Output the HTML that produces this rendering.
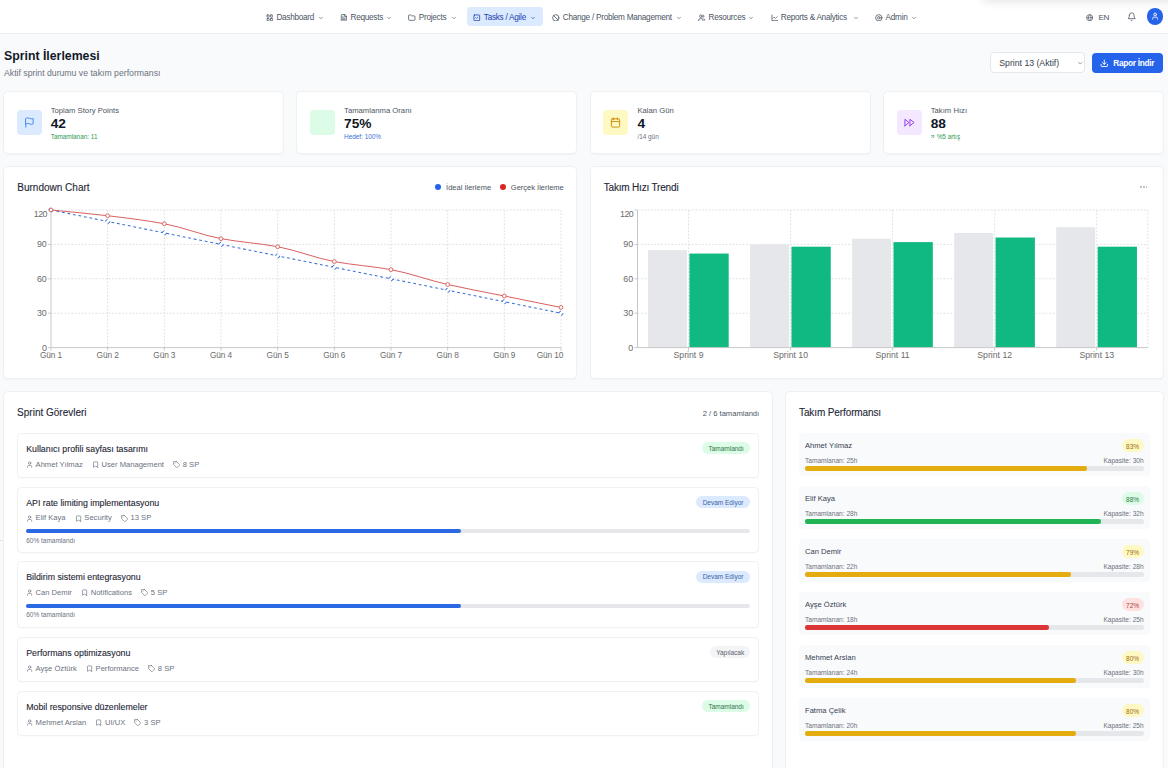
<!DOCTYPE html><html><head><meta charset="utf-8"><style>
html,body{margin:0;padding:0;}
body{width:1168px;height:768px;overflow:hidden;position:relative;background:#f9fafb;font-family:"Liberation Sans", sans-serif;}
.t{position:absolute;white-space:nowrap;font-family:"Liberation Sans", sans-serif;}
svg{display:block}
</style></head><body>
<div style="position:absolute;left:0px;top:0px;width:1168px;height:33px;background:#fff;border-bottom:1px solid #eceef1;box-sizing:content-box"></div>
<div style="position:absolute;left:982px;top:-40px;width:200px;height:40px;background:#fff;border-radius:6px;box-shadow:0 2px 10px rgba(0,0,0,0.10)"></div>
<div style="position:absolute;left:466.8px;top:7.1px;width:76.4px;height:19px;background:#dbeafe;border-radius:3.5px"></div>
<svg style="position:absolute;left:265.90000000000003px;top:13.8px;" width="7.6" height="7.6" viewBox="0 0 24 24" fill="none" stroke="#4b5563" stroke-width="2.5" stroke-linecap="round" stroke-linejoin="round"><rect width="7" height="7" x="3" y="3" rx="1.5"/><rect width="7" height="7" x="14" y="3" rx="1.5"/><rect width="7" height="7" x="14" y="14" rx="1.5"/><rect width="7" height="7" x="3" y="14" rx="1.5"/></svg>
<div class="t" style="left:276.4px;top:13.96px;font-size:8.2px;line-height:8.2px;color:#4b5563;font-weight:400;letter-spacing:-0.26px">Dashboard</div>
<svg style="position:absolute;left:317.5px;top:14.6px;" width="6" height="6" viewBox="0 0 24 24" fill="none" stroke="#4b5563" stroke-width="2.4" stroke-linecap="round" stroke-linejoin="round"><path d="m6 9 6 6 6-6"/></svg>
<svg style="position:absolute;left:339.8px;top:13.8px;" width="7.6" height="7.6" viewBox="0 0 24 24" fill="none" stroke="#4b5563" stroke-width="2.5" stroke-linecap="round" stroke-linejoin="round"><path d="M15 2H6a2 2 0 0 0-2 2v16a2 2 0 0 0 2 2h12a2 2 0 0 0 2-2V7Z"/><path d="M14 2v4a2 2 0 0 0 2 2h4"/><path d="M10 9H8"/><path d="M16 13H8"/><path d="M16 17H8"/></svg>
<div class="t" style="left:350.5px;top:13.96px;font-size:8.2px;line-height:8.2px;color:#4b5563;font-weight:400;letter-spacing:-0.26px">Requests</div>
<svg style="position:absolute;left:385.8px;top:14.6px;" width="6" height="6" viewBox="0 0 24 24" fill="none" stroke="#4b5563" stroke-width="2.4" stroke-linecap="round" stroke-linejoin="round"><path d="m6 9 6 6 6-6"/></svg>
<svg style="position:absolute;left:408.2px;top:13.8px;" width="7.6" height="7.6" viewBox="0 0 24 24" fill="none" stroke="#4b5563" stroke-width="2.5" stroke-linecap="round" stroke-linejoin="round"><path d="M20 20a2 2 0 0 0 2-2V8a2 2 0 0 0-2-2h-7.9a2 2 0 0 1-1.69-.9L9.6 3.9A2 2 0 0 0 7.93 3H4a2 2 0 0 0-2 2v13a2 2 0 0 0 2 2Z"/></svg>
<div class="t" style="left:418.8px;top:13.96px;font-size:8.2px;line-height:8.2px;color:#4b5563;font-weight:400;letter-spacing:-0.26px">Projects</div>
<svg style="position:absolute;left:450.6px;top:14.6px;" width="6" height="6" viewBox="0 0 24 24" fill="none" stroke="#4b5563" stroke-width="2.4" stroke-linecap="round" stroke-linejoin="round"><path d="m6 9 6 6 6-6"/></svg>
<svg style="position:absolute;left:473.3px;top:13.8px;" width="7.6" height="7.6" viewBox="0 0 24 24" fill="none" stroke="#1e40af" stroke-width="2.5" stroke-linecap="round" stroke-linejoin="round"><rect width="18" height="18" x="3" y="3" rx="2"/><path d="m9 12 2 2 4-4"/></svg>
<div class="t" style="left:483.8px;top:13.96px;font-size:8.2px;line-height:8.2px;color:#1e40af;font-weight:400;letter-spacing:-0.26px">Tasks / Agile</div>
<svg style="position:absolute;left:529.5999999999999px;top:14.6px;" width="6" height="6" viewBox="0 0 24 24" fill="none" stroke="#1e40af" stroke-width="2.4" stroke-linecap="round" stroke-linejoin="round"><path d="m6 9 6 6 6-6"/></svg>
<svg style="position:absolute;left:552.3px;top:13.8px;" width="7.6" height="7.6" viewBox="0 0 24 24" fill="none" stroke="#4b5563" stroke-width="2.5" stroke-linecap="round" stroke-linejoin="round"><circle cx="12" cy="12" r="10"/><path d="m4.9 4.9 14.2 14.2"/></svg>
<div class="t" style="left:562.8px;top:13.96px;font-size:8.2px;line-height:8.2px;color:#4b5563;font-weight:400;letter-spacing:-0.26px">Change / Problem Management</div>
<svg style="position:absolute;left:676.0px;top:14.6px;" width="6" height="6" viewBox="0 0 24 24" fill="none" stroke="#4b5563" stroke-width="2.4" stroke-linecap="round" stroke-linejoin="round"><path d="m6 9 6 6 6-6"/></svg>
<svg style="position:absolute;left:697.5px;top:13.8px;" width="7.6" height="7.6" viewBox="0 0 24 24" fill="none" stroke="#4b5563" stroke-width="2.5" stroke-linecap="round" stroke-linejoin="round"><path d="M16 21v-2a4 4 0 0 0-4-4H6a4 4 0 0 0-4 4v2"/><circle cx="9" cy="7" r="4"/><path d="M22 21v-2a4 4 0 0 0-3-3.87"/><path d="M16 3.13a4 4 0 0 1 0 7.75"/></svg>
<div class="t" style="left:708.5px;top:13.96px;font-size:8.2px;line-height:8.2px;color:#4b5563;font-weight:400;letter-spacing:-0.26px">Resources</div>
<svg style="position:absolute;left:748.4px;top:14.6px;" width="6" height="6" viewBox="0 0 24 24" fill="none" stroke="#4b5563" stroke-width="2.4" stroke-linecap="round" stroke-linejoin="round"><path d="m6 9 6 6 6-6"/></svg>
<svg style="position:absolute;left:770.5px;top:13.8px;" width="7.6" height="7.6" viewBox="0 0 24 24" fill="none" stroke="#4b5563" stroke-width="2.5" stroke-linecap="round" stroke-linejoin="round"><path d="M3 3v18h18"/><path d="m19 9-5 5-4-4-3 3"/></svg>
<div class="t" style="left:780.8px;top:13.96px;font-size:8.2px;line-height:8.2px;color:#4b5563;font-weight:400;letter-spacing:-0.26px">Reports &amp; Analytics</div>
<svg style="position:absolute;left:853.1999999999999px;top:14.6px;" width="6" height="6" viewBox="0 0 24 24" fill="none" stroke="#4b5563" stroke-width="2.4" stroke-linecap="round" stroke-linejoin="round"><path d="m6 9 6 6 6-6"/></svg>
<svg style="position:absolute;left:875.3px;top:13.8px;" width="7.6" height="7.6" viewBox="0 0 24 24" fill="none" stroke="#4b5563" stroke-width="2.5" stroke-linecap="round" stroke-linejoin="round"><circle cx="12" cy="12" r="10"/><circle cx="12" cy="12" r="4"/></svg>
<div class="t" style="left:885.6px;top:13.96px;font-size:8.2px;line-height:8.2px;color:#4b5563;font-weight:400;letter-spacing:-0.26px">Admin</div>
<svg style="position:absolute;left:910.8px;top:14.6px;" width="6" height="6" viewBox="0 0 24 24" fill="none" stroke="#4b5563" stroke-width="2.4" stroke-linecap="round" stroke-linejoin="round"><path d="m6 9 6 6 6-6"/></svg>
<svg style="position:absolute;left:1086.0px;top:13.7px;" width="7.4" height="7.4" viewBox="0 0 24 24" fill="none" stroke="#4b5563" stroke-width="2.2" stroke-linecap="round" stroke-linejoin="round"><circle cx="12" cy="12" r="10"/><path d="M12 2a14.5 14.5 0 0 0 0 20 14.5 14.5 0 0 0 0-20"/><path d="M2 12h20"/></svg>
<div class="t" style="left:1098.4px;top:13.64px;font-size:8.1px;line-height:8.1px;color:#4b5563;font-weight:400;letter-spacing:-0.4px">EN</div>
<svg style="position:absolute;left:1126.8px;top:12.3px;" width="9.4" height="9.4" viewBox="0 0 24 24" fill="none" stroke="#4b5563" stroke-width="2" stroke-linecap="round" stroke-linejoin="round"><path d="M6 8a6 6 0 0 1 12 0c0 7 3 9 3 9H3s3-2 3-9"/><path d="M10.3 21a1.94 1.94 0 0 0 3.4 0"/></svg>
<div style="position:absolute;left:1146.5px;top:8.3px;width:16.6px;height:16.6px;background:#2563eb;border-radius:50%"></div>
<svg style="position:absolute;left:1150.9px;top:12.4px;" width="8.2" height="8.2" viewBox="0 0 24 24" fill="none" stroke="#fff" stroke-width="2.6" stroke-linecap="round" stroke-linejoin="round"><path d="M19 21v-2a4 4 0 0 0-4-4H9a4 4 0 0 0-4 4v2"/><circle cx="12" cy="7" r="4"/></svg>
<div class="t" style="left:4px;top:50.39px;font-size:12.3px;line-height:12.3px;color:#111827;font-weight:700;">Sprint İlerlemesi</div>
<div class="t" style="left:4px;top:68.74px;font-size:8.7px;line-height:8.7px;color:#6b7280;font-weight:400;">Aktif sprint durumu ve takım performansı</div>
<div style="position:absolute;left:990.0px;top:52.2px;width:95.0px;height:21px;background:#fff;border:1px solid #e5e7eb;border-radius:4px;box-sizing:border-box"></div>
<div class="t" style="left:999.3px;top:58.94px;font-size:8.7px;line-height:8.7px;color:#374151;font-weight:400;">Sprint 13 (Aktif)</div>
<svg style="position:absolute;left:1077.4px;top:60.2px;" width="6.5" height="6.5" viewBox="0 0 24 24" fill="none" stroke="#6b7280" stroke-width="2.6" stroke-linecap="round" stroke-linejoin="round"><path d="m6 9 6 6 6-6"/></svg>
<div style="position:absolute;left:1092.2px;top:52.5px;width:70.8px;height:20.5px;background:#2563eb;border-radius:4px"></div>
<svg style="position:absolute;left:1099.8px;top:58.9px;" width="8.6" height="8.6" viewBox="0 0 24 24" fill="none" stroke="#fff" stroke-width="2.6" stroke-linecap="round" stroke-linejoin="round"><path d="M21 15v4a2 2 0 0 1-2 2H5a2 2 0 0 1-2-2v-4"/><polyline points="7 10 12 15 17 10"/><line x1="12" x2="12" y1="15" y2="3"/></svg>
<div class="t" style="left:1113.3px;top:59.17px;font-size:8.3px;line-height:8.3px;color:#fff;font-weight:700;letter-spacing:-0.3px">Rapor İndir</div>
<div style="position:absolute;left:3.0px;top:91.2px;width:280.95px;height:62.5px;background:#fff;border:1px solid #eff0f2;border-radius:4.5px;box-sizing:border-box;box-shadow:0 1px 1.5px rgba(0,0,0,0.03)"></div>
<div style="position:absolute;left:16.7px;top:110.2px;width:25px;height:25px;background:#dbeafe;border-radius:4px"></div>
<svg style="position:absolute;left:23.7px;top:117.2px;" width="11" height="11" viewBox="0 0 24 24" fill="none" stroke="#3b82f6" stroke-width="2" stroke-linecap="round" stroke-linejoin="round"><path d="M4 15s1-1 4-1 5 2 8 2 4-1 4-1V3s-1 1-4 1-5-2-8-2-4 1-4 1z"/><line x1="4" x2="4" y1="22" y2="15"/></svg>
<div class="t" style="left:50.7px;top:107.28px;font-size:7.7px;line-height:7.7px;color:#4b5563;font-weight:400;">Toplam Story Points</div>
<div class="t" style="left:50.7px;top:117.30px;font-size:13.7px;line-height:13.7px;color:#111827;font-weight:700;">42</div>
<div class="t" style="left:50.7px;top:134.08px;font-size:6.4px;line-height:6.4px;color:#2f9a58;font-weight:400;">Tamamlanan: 11</div>
<div style="position:absolute;left:296.34999999999997px;top:91.2px;width:280.95px;height:62.5px;background:#fff;border:1px solid #eff0f2;border-radius:4.5px;box-sizing:border-box;box-shadow:0 1px 1.5px rgba(0,0,0,0.03)"></div>
<div style="position:absolute;left:310.04999999999995px;top:110.2px;width:25px;height:25px;background:#dcfce7;border-radius:4px"></div>
<div class="t" style="left:344.04999999999995px;top:107.28px;font-size:7.7px;line-height:7.7px;color:#4b5563;font-weight:400;">Tamamlanma Oranı</div>
<div class="t" style="left:344.04999999999995px;top:117.30px;font-size:13.7px;line-height:13.7px;color:#111827;font-weight:700;">75%</div>
<div class="t" style="left:344.04999999999995px;top:134.08px;font-size:6.4px;line-height:6.4px;color:#3b6fd6;font-weight:400;">Hedef: 100%</div>
<div style="position:absolute;left:589.6999999999999px;top:91.2px;width:280.95px;height:62.5px;background:#fff;border:1px solid #eff0f2;border-radius:4.5px;box-sizing:border-box;box-shadow:0 1px 1.5px rgba(0,0,0,0.03)"></div>
<div style="position:absolute;left:603.4px;top:110.2px;width:25px;height:25px;background:#fef9c3;border-radius:4px"></div>
<svg style="position:absolute;left:610.4px;top:117.2px;" width="11" height="11" viewBox="0 0 24 24" fill="none" stroke="#ca8a04" stroke-width="2" stroke-linecap="round" stroke-linejoin="round"><rect width="18" height="18" x="3" y="4" rx="2"/><path d="M16 2v4"/><path d="M8 2v4"/><path d="M3 10h18"/></svg>
<div class="t" style="left:637.4px;top:107.28px;font-size:7.7px;line-height:7.7px;color:#4b5563;font-weight:400;">Kalan Gün</div>
<div class="t" style="left:637.4px;top:117.30px;font-size:13.7px;line-height:13.7px;color:#111827;font-weight:700;">4</div>
<div class="t" style="left:637.4px;top:134.08px;font-size:6.4px;line-height:6.4px;color:#6b7280;font-weight:400;">/14 gün</div>
<div style="position:absolute;left:883.05px;top:91.2px;width:280.95px;height:62.5px;background:#fff;border:1px solid #eff0f2;border-radius:4.5px;box-sizing:border-box;box-shadow:0 1px 1.5px rgba(0,0,0,0.03)"></div>
<div style="position:absolute;left:896.75px;top:110.2px;width:25px;height:25px;background:#f3e8ff;border-radius:4px"></div>
<svg style="position:absolute;left:903.75px;top:117.2px;" width="11" height="11" viewBox="0 0 24 24" fill="none" stroke="#9333ea" stroke-width="2" stroke-linecap="round" stroke-linejoin="round"><polygon points="13 19 22 12 13 5 13 19"/><polygon points="2 19 11 12 2 5 2 19"/></svg>
<div class="t" style="left:930.75px;top:107.28px;font-size:7.7px;line-height:7.7px;color:#4b5563;font-weight:400;">Takım Hızı</div>
<div class="t" style="left:930.75px;top:117.30px;font-size:13.7px;line-height:13.7px;color:#111827;font-weight:700;">88</div>
<svg style="position:absolute;left:930.4499999999999px;top:133.6px;" width="5.2" height="5.2" viewBox="0 0 24 24" fill="none" stroke="#2f9a58" stroke-width="2.6" stroke-linecap="round" stroke-linejoin="round"><path d="M7 17 17 7"/><path d="M7 7h10v10"/></svg>
<div class="t" style="left:936.65px;top:134.08px;font-size:6.4px;line-height:6.4px;color:#2f9a58;font-weight:400;">%5 artış</div>
<div style="position:absolute;left:3.0px;top:165.9px;width:574.3px;height:213.6px;background:#fff;border:1px solid #eff0f2;border-radius:4.5px;box-sizing:border-box;box-shadow:0 1px 1.5px rgba(0,0,0,0.03)"></div>
<div style="position:absolute;left:589.6999999999999px;top:165.9px;width:574.3px;height:213.6px;background:#fff;border:1px solid #eff0f2;border-radius:4.5px;box-sizing:border-box;box-shadow:0 1px 1.5px rgba(0,0,0,0.03)"></div>
<div class="t" style="left:17.3px;top:183.24px;font-size:10px;line-height:10px;color:#1f2937;font-weight:400;-webkit-text-stroke:0.12px #1f2937">Burndown Chart</div>
<div class="t" style="left:603.7px;top:183.24px;font-size:10px;line-height:10px;color:#1f2937;font-weight:400;-webkit-text-stroke:0.12px #1f2937;letter-spacing:-0.18px">Takım Hızı Trendi</div>
<div style="position:absolute;left:435.3px;top:184.0px;width:6.2px;height:6.2px;background:#2563eb;border-radius:50%"></div>
<div class="t" style="left:446.1px;top:184.45px;font-size:7.5px;line-height:7.5px;color:#4b5563;font-weight:400;">İdeal İlerleme</div>
<div style="position:absolute;left:499.9px;top:184.0px;width:6.2px;height:6.2px;background:#dc2626;border-radius:50%"></div>
<div class="t" style="left:510.8px;top:184.45px;font-size:7.5px;line-height:7.5px;color:#4b5563;font-weight:400;">Gerçek İlerleme</div>
<div style="position:absolute;left:1140.3px;top:186.0px;width:1.6px;height:2.0px;background:#c4c4c4"></div>
<div style="position:absolute;left:1143.0px;top:186.0px;width:1.6px;height:2.0px;background:#c4c4c4"></div>
<div style="position:absolute;left:1145.7px;top:186.0px;width:1.6px;height:2.0px;background:#c4c4c4"></div>
<svg style="position:absolute;left:0;top:0" width="1168" height="768"><line x1="51.0" y1="313.20000000000005" x2="561.0" y2="313.20000000000005" stroke="#dcdfe3" stroke-dasharray="1.7 1.7"/><line x1="51.0" y1="278.8" x2="561.0" y2="278.8" stroke="#dcdfe3" stroke-dasharray="1.7 1.7"/><line x1="51.0" y1="244.40000000000003" x2="561.0" y2="244.40000000000003" stroke="#dcdfe3" stroke-dasharray="1.7 1.7"/><line x1="51.0" y1="210.00000000000003" x2="561.0" y2="210.00000000000003" stroke="#dcdfe3" stroke-dasharray="1.7 1.7"/><line x1="107.66666666666666" y1="210.00000000000003" x2="107.66666666666666" y2="347.6" stroke="#dcdfe3" stroke-dasharray="1.7 1.7"/><line x1="164.33333333333331" y1="210.00000000000003" x2="164.33333333333331" y2="347.6" stroke="#dcdfe3" stroke-dasharray="1.7 1.7"/><line x1="221.0" y1="210.00000000000003" x2="221.0" y2="347.6" stroke="#dcdfe3" stroke-dasharray="1.7 1.7"/><line x1="277.66666666666663" y1="210.00000000000003" x2="277.66666666666663" y2="347.6" stroke="#dcdfe3" stroke-dasharray="1.7 1.7"/><line x1="334.3333333333333" y1="210.00000000000003" x2="334.3333333333333" y2="347.6" stroke="#dcdfe3" stroke-dasharray="1.7 1.7"/><line x1="391.0" y1="210.00000000000003" x2="391.0" y2="347.6" stroke="#dcdfe3" stroke-dasharray="1.7 1.7"/><line x1="447.6666666666667" y1="210.00000000000003" x2="447.6666666666667" y2="347.6" stroke="#dcdfe3" stroke-dasharray="1.7 1.7"/><line x1="504.3333333333333" y1="210.00000000000003" x2="504.3333333333333" y2="347.6" stroke="#dcdfe3" stroke-dasharray="1.7 1.7"/><line x1="561.0" y1="210.00000000000003" x2="561.0" y2="347.6" stroke="#dcdfe3" stroke-dasharray="1.7 1.7"/><line x1="51.0" y1="210.00000000000003" x2="51.0" y2="347.6" stroke="#c8c8c8" stroke-width="1"/><line x1="51.0" y1="347.6" x2="561.0" y2="347.6" stroke="#c8c8c8" stroke-width="1"/><line x1="48.0" y1="347.6" x2="51.0" y2="347.6" stroke="#c8c8c8"/><line x1="48.0" y1="313.20000000000005" x2="51.0" y2="313.20000000000005" stroke="#c8c8c8"/><line x1="48.0" y1="278.8" x2="51.0" y2="278.8" stroke="#c8c8c8"/><line x1="48.0" y1="244.40000000000003" x2="51.0" y2="244.40000000000003" stroke="#c8c8c8"/><line x1="48.0" y1="210.00000000000003" x2="51.0" y2="210.00000000000003" stroke="#c8c8c8"/><line x1="51.0" y1="347.6" x2="51.0" y2="350.6" stroke="#c8c8c8"/><line x1="107.66666666666666" y1="347.6" x2="107.66666666666666" y2="350.6" stroke="#c8c8c8"/><line x1="164.33333333333331" y1="347.6" x2="164.33333333333331" y2="350.6" stroke="#c8c8c8"/><line x1="221.0" y1="347.6" x2="221.0" y2="350.6" stroke="#c8c8c8"/><line x1="277.66666666666663" y1="347.6" x2="277.66666666666663" y2="350.6" stroke="#c8c8c8"/><line x1="334.3333333333333" y1="347.6" x2="334.3333333333333" y2="350.6" stroke="#c8c8c8"/><line x1="391.0" y1="347.6" x2="391.0" y2="350.6" stroke="#c8c8c8"/><line x1="447.6666666666667" y1="347.6" x2="447.6666666666667" y2="350.6" stroke="#c8c8c8"/><line x1="504.3333333333333" y1="347.6" x2="504.3333333333333" y2="350.6" stroke="#c8c8c8"/><line x1="561.0" y1="347.6" x2="561.0" y2="350.6" stroke="#c8c8c8"/><polyline points="51.00,210.00 107.67,221.47 164.33,232.93 221.00,244.40 277.67,255.87 334.33,267.33 391.00,278.80 447.67,290.27 504.33,301.73 561.00,313.20" fill="none" stroke="#3a6fd8" stroke-width="1.05" stroke-dasharray="2.8 2.8"/><path d="M51.00,210.00 C69.89,211.91 88.78,213.50 107.67,215.73 C126.56,217.96 145.44,220.28 164.33,223.76 C183.22,227.24 202.11,235.19 221.00,238.67 C239.89,242.14 258.78,243.22 277.67,246.69 C296.56,250.17 315.44,258.12 334.33,261.60 C353.22,265.08 372.11,266.15 391.00,269.63 C409.89,273.10 428.78,280.21 447.67,284.53 C466.56,288.85 485.44,292.18 504.33,296.00 C523.22,299.82 542.11,303.64 561.00,307.47" fill="none" stroke="#d9605f" stroke-width="1.0"/><circle cx="51.00" cy="210.00" r="2.0" fill="#fff" stroke="#3a6fd8" stroke-width="1.0" stroke-dasharray="2.8 2.8"/><circle cx="51.00" cy="210.00" r="1.9" fill="#fff" stroke="#d9605f" stroke-width="0.95"/><circle cx="107.67" cy="221.47" r="2.0" fill="#fff" stroke="#3a6fd8" stroke-width="1.0" stroke-dasharray="2.8 2.8"/><circle cx="107.67" cy="215.73" r="1.9" fill="#fff" stroke="#d9605f" stroke-width="0.95"/><circle cx="164.33" cy="232.93" r="2.0" fill="#fff" stroke="#3a6fd8" stroke-width="1.0" stroke-dasharray="2.8 2.8"/><circle cx="164.33" cy="223.76" r="1.9" fill="#fff" stroke="#d9605f" stroke-width="0.95"/><circle cx="221.00" cy="244.40" r="2.0" fill="#fff" stroke="#3a6fd8" stroke-width="1.0" stroke-dasharray="2.8 2.8"/><circle cx="221.00" cy="238.67" r="1.9" fill="#fff" stroke="#d9605f" stroke-width="0.95"/><circle cx="277.67" cy="255.87" r="2.0" fill="#fff" stroke="#3a6fd8" stroke-width="1.0" stroke-dasharray="2.8 2.8"/><circle cx="277.67" cy="246.69" r="1.9" fill="#fff" stroke="#d9605f" stroke-width="0.95"/><circle cx="334.33" cy="267.33" r="2.0" fill="#fff" stroke="#3a6fd8" stroke-width="1.0" stroke-dasharray="2.8 2.8"/><circle cx="334.33" cy="261.60" r="1.9" fill="#fff" stroke="#d9605f" stroke-width="0.95"/><circle cx="391.00" cy="278.80" r="2.0" fill="#fff" stroke="#3a6fd8" stroke-width="1.0" stroke-dasharray="2.8 2.8"/><circle cx="391.00" cy="269.63" r="1.9" fill="#fff" stroke="#d9605f" stroke-width="0.95"/><circle cx="447.67" cy="290.27" r="2.0" fill="#fff" stroke="#3a6fd8" stroke-width="1.0" stroke-dasharray="2.8 2.8"/><circle cx="447.67" cy="284.53" r="1.9" fill="#fff" stroke="#d9605f" stroke-width="0.95"/><circle cx="504.33" cy="301.73" r="2.0" fill="#fff" stroke="#3a6fd8" stroke-width="1.0" stroke-dasharray="2.8 2.8"/><circle cx="504.33" cy="296.00" r="1.9" fill="#fff" stroke="#d9605f" stroke-width="0.95"/><circle cx="561.00" cy="313.20" r="2.0" fill="#fff" stroke="#3a6fd8" stroke-width="1.0" stroke-dasharray="2.8 2.8"/><circle cx="561.00" cy="307.47" r="1.9" fill="#fff" stroke="#d9605f" stroke-width="0.95"/><line x1="637.5" y1="313.20000000000005" x2="1147.8" y2="313.20000000000005" stroke="#dcdfe3" stroke-dasharray="1.7 1.7"/><line x1="637.5" y1="278.8" x2="1147.8" y2="278.8" stroke="#dcdfe3" stroke-dasharray="1.7 1.7"/><line x1="637.5" y1="244.40000000000003" x2="1147.8" y2="244.40000000000003" stroke="#dcdfe3" stroke-dasharray="1.7 1.7"/><line x1="637.5" y1="210.00000000000003" x2="1147.8" y2="210.00000000000003" stroke="#dcdfe3" stroke-dasharray="1.7 1.7"/><line x1="688.53" y1="210.00000000000003" x2="688.53" y2="347.6" stroke="#dcdfe3" stroke-dasharray="1.7 1.7"/><line x1="790.5899999999999" y1="210.00000000000003" x2="790.5899999999999" y2="347.6" stroke="#dcdfe3" stroke-dasharray="1.7 1.7"/><line x1="892.65" y1="210.00000000000003" x2="892.65" y2="347.6" stroke="#dcdfe3" stroke-dasharray="1.7 1.7"/><line x1="994.71" y1="210.00000000000003" x2="994.71" y2="347.6" stroke="#dcdfe3" stroke-dasharray="1.7 1.7"/><line x1="1096.77" y1="210.00000000000003" x2="1096.77" y2="347.6" stroke="#dcdfe3" stroke-dasharray="1.7 1.7"/><line x1="1147.8" y1="210.00000000000003" x2="1147.8" y2="347.6" stroke="#dcdfe3" stroke-dasharray="1.7 1.7"/><rect x="648.00" y="250.13" width="39" height="97.47" fill="#e5e7eb"/><rect x="689.40" y="253.57" width="39.3" height="94.03" fill="#10b981"/><rect x="750.06" y="244.40" width="39" height="103.20" fill="#e5e7eb"/><rect x="791.46" y="246.69" width="39.3" height="100.91" fill="#10b981"/><rect x="852.12" y="238.67" width="39" height="108.93" fill="#e5e7eb"/><rect x="893.52" y="242.11" width="39.3" height="105.49" fill="#10b981"/><rect x="954.18" y="232.93" width="39" height="114.67" fill="#e5e7eb"/><rect x="995.58" y="237.52" width="39.3" height="110.08" fill="#10b981"/><rect x="1056.24" y="227.20" width="39" height="120.40" fill="#e5e7eb"/><rect x="1097.64" y="246.69" width="39.3" height="100.91" fill="#10b981"/><line x1="637.5" y1="210.00000000000003" x2="637.5" y2="347.6" stroke="#c8c8c8"/><line x1="637.5" y1="347.6" x2="1147.8" y2="347.6" stroke="#c8c8c8"/><line x1="634.5" y1="347.6" x2="637.5" y2="347.6" stroke="#c8c8c8"/><line x1="634.5" y1="313.20000000000005" x2="637.5" y2="313.20000000000005" stroke="#c8c8c8"/><line x1="634.5" y1="278.8" x2="637.5" y2="278.8" stroke="#c8c8c8"/><line x1="634.5" y1="244.40000000000003" x2="637.5" y2="244.40000000000003" stroke="#c8c8c8"/><line x1="634.5" y1="210.00000000000003" x2="637.5" y2="210.00000000000003" stroke="#c8c8c8"/><line x1="688.53" y1="347.6" x2="688.53" y2="350.6" stroke="#c8c8c8"/><line x1="790.5899999999999" y1="347.6" x2="790.5899999999999" y2="350.6" stroke="#c8c8c8"/><line x1="892.65" y1="347.6" x2="892.65" y2="350.6" stroke="#c8c8c8"/><line x1="994.71" y1="347.6" x2="994.71" y2="350.6" stroke="#c8c8c8"/><line x1="1096.77" y1="347.6" x2="1096.77" y2="350.6" stroke="#c8c8c8"/></svg>
<div class="t" style="right:1121.2px;top:343.57px;font-size:8.9px;line-height:8.9px;color:#6b6b6b;font-weight:400;">0</div>
<div class="t" style="right:534.9px;top:343.57px;font-size:8.9px;line-height:8.9px;color:#6b6b6b;font-weight:400;">0</div>
<div class="t" style="right:1121.2px;top:309.17px;font-size:8.9px;line-height:8.9px;color:#6b6b6b;font-weight:400;">30</div>
<div class="t" style="right:534.9px;top:309.17px;font-size:8.9px;line-height:8.9px;color:#6b6b6b;font-weight:400;">30</div>
<div class="t" style="right:1121.2px;top:274.77px;font-size:8.9px;line-height:8.9px;color:#6b6b6b;font-weight:400;">60</div>
<div class="t" style="right:534.9px;top:274.77px;font-size:8.9px;line-height:8.9px;color:#6b6b6b;font-weight:400;">60</div>
<div class="t" style="right:1121.2px;top:240.37px;font-size:8.9px;line-height:8.9px;color:#6b6b6b;font-weight:400;">90</div>
<div class="t" style="right:534.9px;top:240.37px;font-size:8.9px;line-height:8.9px;color:#6b6b6b;font-weight:400;">90</div>
<div class="t" style="right:1121.2px;top:210.27px;font-size:8.9px;line-height:8.9px;color:#6b6b6b;font-weight:400;letter-spacing:-0.6px">120</div>
<div class="t" style="right:534.9px;top:210.27px;font-size:8.9px;line-height:8.9px;color:#6b6b6b;font-weight:400;letter-spacing:-0.6px">120</div>
<div class="t" style="left:-149.0px;width:400px;text-align:center;top:351.47px;font-size:8.3px;line-height:8.3px;color:#6b6b6b;font-weight:400;letter-spacing:-0.1px">Gün 1</div>
<div class="t" style="left:-92.33333333333334px;width:400px;text-align:center;top:351.47px;font-size:8.3px;line-height:8.3px;color:#6b6b6b;font-weight:400;letter-spacing:-0.1px">Gün 2</div>
<div class="t" style="left:-35.666666666666686px;width:400px;text-align:center;top:351.47px;font-size:8.3px;line-height:8.3px;color:#6b6b6b;font-weight:400;letter-spacing:-0.1px">Gün 3</div>
<div class="t" style="left:21.0px;width:400px;text-align:center;top:351.47px;font-size:8.3px;line-height:8.3px;color:#6b6b6b;font-weight:400;letter-spacing:-0.1px">Gün 4</div>
<div class="t" style="left:77.66666666666663px;width:400px;text-align:center;top:351.47px;font-size:8.3px;line-height:8.3px;color:#6b6b6b;font-weight:400;letter-spacing:-0.1px">Gün 5</div>
<div class="t" style="left:134.33333333333331px;width:400px;text-align:center;top:351.47px;font-size:8.3px;line-height:8.3px;color:#6b6b6b;font-weight:400;letter-spacing:-0.1px">Gün 6</div>
<div class="t" style="left:191.0px;width:400px;text-align:center;top:351.47px;font-size:8.3px;line-height:8.3px;color:#6b6b6b;font-weight:400;letter-spacing:-0.1px">Gün 7</div>
<div class="t" style="left:247.66666666666669px;width:400px;text-align:center;top:351.47px;font-size:8.3px;line-height:8.3px;color:#6b6b6b;font-weight:400;letter-spacing:-0.1px">Gün 8</div>
<div class="t" style="left:304.3333333333333px;width:400px;text-align:center;top:351.47px;font-size:8.3px;line-height:8.3px;color:#6b6b6b;font-weight:400;letter-spacing:-0.1px">Gün 9</div>
<div class="t" style="right:604.7px;top:351.47px;font-size:8.3px;line-height:8.3px;color:#6b6b6b;font-weight:400;letter-spacing:-0.1px">Gün 10</div>
<div class="t" style="left:488.53px;width:400px;text-align:center;top:351.14px;font-size:8.7px;line-height:8.7px;color:#6b6b6b;font-weight:400;">Sprint 9</div>
<div class="t" style="left:590.5899999999999px;width:400px;text-align:center;top:351.14px;font-size:8.7px;line-height:8.7px;color:#6b6b6b;font-weight:400;">Sprint 10</div>
<div class="t" style="left:692.65px;width:400px;text-align:center;top:351.14px;font-size:8.7px;line-height:8.7px;color:#6b6b6b;font-weight:400;">Sprint 11</div>
<div class="t" style="left:794.71px;width:400px;text-align:center;top:351.14px;font-size:8.7px;line-height:8.7px;color:#6b6b6b;font-weight:400;">Sprint 12</div>
<div class="t" style="left:896.77px;width:400px;text-align:center;top:351.14px;font-size:8.7px;line-height:8.7px;color:#6b6b6b;font-weight:400;">Sprint 13</div>
<div style="position:absolute;left:3.0px;top:391.2px;width:769.8666666666667px;height:420px;background:#fff;border:1px solid #eff0f2;border-radius:4.5px;box-sizing:border-box;box-shadow:0 1px 1.5px rgba(0,0,0,0.03)"></div>
<div style="position:absolute;left:785.2666666666667px;top:391.2px;width:378.73333333333335px;height:420px;background:#fff;border:1px solid #eff0f2;border-radius:4.5px;box-sizing:border-box;box-shadow:0 1px 1.5px rgba(0,0,0,0.03)"></div>
<div class="t" style="left:17.1px;top:408.34px;font-size:10px;line-height:10px;color:#1f2937;font-weight:400;-webkit-text-stroke:0.12px #1f2937">Sprint Görevleri</div>
<div class="t" style="right:408.79999999999995px;top:409.97px;font-size:7.6px;line-height:7.6px;color:#4b5563;font-weight:400;">2 / 6 tamamlandı</div>
<div style="position:absolute;left:16.9px;top:432.8px;width:742.3px;height:45.1px;background:#fff;border:1px solid #f0f1f3;border-radius:4.5px;box-sizing:border-box;box-shadow:0 0.5px 1px rgba(0,0,0,0.02)"></div>
<div class="t" style="left:26.2px;top:444.75px;font-size:8.8px;line-height:8.8px;color:#1f2937;font-weight:400;-webkit-text-stroke:0.12px #1f2937">Kullanıcı profili sayfası tasarımı</div>
<div class="t" style="left:25.8px;top:460.67px;font-size:7.6px;line-height:7.6px;color:#6b7280;display:flex;align-items:center"><span style="display:inline-flex;align-items:center;margin-left:0"><svg width="7.2" height="7.2" viewBox="0 0 24 24" fill="none" stroke="#6b7280" stroke-width="2.2" stroke-linecap="round" stroke-linejoin="round" style="display:inline-block;margin-right:2.6px;position:relative;top:-0.1px"><path d="M19 21v-2a4 4 0 0 0-4-4H9a4 4 0 0 0-4 4v2"/><circle cx="12" cy="7" r="4"/></svg><span>Ahmet Yılmaz</span></span><span style="display:inline-flex;align-items:center;margin-left:9px"><svg width="7.2" height="7.2" viewBox="0 0 24 24" fill="none" stroke="#6b7280" stroke-width="2.2" stroke-linecap="round" stroke-linejoin="round" style="display:inline-block;margin-right:2.6px;position:relative;top:-0.1px"><path d="m19 21-7-4-7 4V5a2 2 0 0 1 2-2h10a2 2 0 0 1 2 2v16z"/></svg><span>User Management</span></span><span style="display:inline-flex;align-items:center;margin-left:9px"><svg width="7.2" height="7.2" viewBox="0 0 24 24" fill="none" stroke="#6b7280" stroke-width="2.2" stroke-linecap="round" stroke-linejoin="round" style="display:inline-block;margin-right:2.6px;position:relative;top:-0.1px"><path d="M12 2H2v10l9.29 9.29c.94.94 2.48.94 3.42 0l6.58-6.58c.94-.94.94-2.48 0-3.42L12 2Z"/><path d="M7 7h.01"/></svg><span>8 SP</span></span></div>
<div style="position:absolute;left:701.9px;top:442.2px;width:48.4px;height:12px;background:#dcfce7;border-radius:6px"></div>
<div class="t" style="left:526.0999999999999px;width:400px;text-align:center;top:445.70px;font-size:6.5px;line-height:6.5px;color:#2f7448;font-weight:400;">Tamamlandı</div>
<div style="position:absolute;left:16.9px;top:486.6px;width:742.3px;height:66.5px;background:#fff;border:1px solid #f0f1f3;border-radius:4.5px;box-sizing:border-box;box-shadow:0 0.5px 1px rgba(0,0,0,0.02)"></div>
<div class="t" style="left:26.2px;top:498.55px;font-size:8.8px;line-height:8.8px;color:#1f2937;font-weight:400;-webkit-text-stroke:0.12px #1f2937">API rate limiting implementasyonu</div>
<div class="t" style="left:25.8px;top:514.47px;font-size:7.6px;line-height:7.6px;color:#6b7280;display:flex;align-items:center"><span style="display:inline-flex;align-items:center;margin-left:0"><svg width="7.2" height="7.2" viewBox="0 0 24 24" fill="none" stroke="#6b7280" stroke-width="2.2" stroke-linecap="round" stroke-linejoin="round" style="display:inline-block;margin-right:2.6px;position:relative;top:-0.1px"><path d="M19 21v-2a4 4 0 0 0-4-4H9a4 4 0 0 0-4 4v2"/><circle cx="12" cy="7" r="4"/></svg><span>Elif Kaya</span></span><span style="display:inline-flex;align-items:center;margin-left:9px"><svg width="7.2" height="7.2" viewBox="0 0 24 24" fill="none" stroke="#6b7280" stroke-width="2.2" stroke-linecap="round" stroke-linejoin="round" style="display:inline-block;margin-right:2.6px;position:relative;top:-0.1px"><path d="m19 21-7-4-7 4V5a2 2 0 0 1 2-2h10a2 2 0 0 1 2 2v16z"/></svg><span>Security</span></span><span style="display:inline-flex;align-items:center;margin-left:9px"><svg width="7.2" height="7.2" viewBox="0 0 24 24" fill="none" stroke="#6b7280" stroke-width="2.2" stroke-linecap="round" stroke-linejoin="round" style="display:inline-block;margin-right:2.6px;position:relative;top:-0.1px"><path d="M12 2H2v10l9.29 9.29c.94.94 2.48.94 3.42 0l6.58-6.58c.94-.94.94-2.48 0-3.42L12 2Z"/><path d="M7 7h.01"/></svg><span>13 SP</span></span></div>
<div style="position:absolute;left:695.8px;top:496.0px;width:54.5px;height:12px;background:#dbeafe;border-radius:6px"></div>
<div class="t" style="left:523.05px;width:400px;text-align:center;top:499.50px;font-size:6.5px;line-height:6.5px;color:#3d5fa8;font-weight:400;">Devam Ediyor</div>
<div style="position:absolute;left:26.2px;top:529.2px;width:724.1px;height:4.1px;background:#e5e7eb;border-radius:2px"></div>
<div style="position:absolute;left:26.2px;top:529.2px;width:434.46px;height:4.1px;background:#2a68e4;border-radius:2px"></div>
<div class="t" style="left:26.2px;top:537.60px;font-size:6.5px;line-height:6.5px;color:#6b7280;font-weight:400;">60% tamamlandı</div>
<div style="position:absolute;left:16.9px;top:561.2px;width:742.3px;height:66.5px;background:#fff;border:1px solid #f0f1f3;border-radius:4.5px;box-sizing:border-box;box-shadow:0 0.5px 1px rgba(0,0,0,0.02)"></div>
<div class="t" style="left:26.2px;top:573.15px;font-size:8.8px;line-height:8.8px;color:#1f2937;font-weight:400;-webkit-text-stroke:0.12px #1f2937">Bildirim sistemi entegrasyonu</div>
<div class="t" style="left:25.8px;top:589.07px;font-size:7.6px;line-height:7.6px;color:#6b7280;display:flex;align-items:center"><span style="display:inline-flex;align-items:center;margin-left:0"><svg width="7.2" height="7.2" viewBox="0 0 24 24" fill="none" stroke="#6b7280" stroke-width="2.2" stroke-linecap="round" stroke-linejoin="round" style="display:inline-block;margin-right:2.6px;position:relative;top:-0.1px"><path d="M19 21v-2a4 4 0 0 0-4-4H9a4 4 0 0 0-4 4v2"/><circle cx="12" cy="7" r="4"/></svg><span>Can Demir</span></span><span style="display:inline-flex;align-items:center;margin-left:9px"><svg width="7.2" height="7.2" viewBox="0 0 24 24" fill="none" stroke="#6b7280" stroke-width="2.2" stroke-linecap="round" stroke-linejoin="round" style="display:inline-block;margin-right:2.6px;position:relative;top:-0.1px"><path d="m19 21-7-4-7 4V5a2 2 0 0 1 2-2h10a2 2 0 0 1 2 2v16z"/></svg><span>Notifications</span></span><span style="display:inline-flex;align-items:center;margin-left:9px"><svg width="7.2" height="7.2" viewBox="0 0 24 24" fill="none" stroke="#6b7280" stroke-width="2.2" stroke-linecap="round" stroke-linejoin="round" style="display:inline-block;margin-right:2.6px;position:relative;top:-0.1px"><path d="M12 2H2v10l9.29 9.29c.94.94 2.48.94 3.42 0l6.58-6.58c.94-.94.94-2.48 0-3.42L12 2Z"/><path d="M7 7h.01"/></svg><span>5 SP</span></span></div>
<div style="position:absolute;left:695.8px;top:570.6px;width:54.5px;height:12px;background:#dbeafe;border-radius:6px"></div>
<div class="t" style="left:523.05px;width:400px;text-align:center;top:574.10px;font-size:6.5px;line-height:6.5px;color:#3d5fa8;font-weight:400;">Devam Ediyor</div>
<div style="position:absolute;left:26.2px;top:603.8000000000001px;width:724.1px;height:4.1px;background:#e5e7eb;border-radius:2px"></div>
<div style="position:absolute;left:26.2px;top:603.8000000000001px;width:434.46px;height:4.1px;background:#2a68e4;border-radius:2px"></div>
<div class="t" style="left:26.2px;top:612.20px;font-size:6.5px;line-height:6.5px;color:#6b7280;font-weight:400;">60% tamamlandı</div>
<div style="position:absolute;left:16.9px;top:637.0px;width:742.3px;height:45.1px;background:#fff;border:1px solid #f0f1f3;border-radius:4.5px;box-sizing:border-box;box-shadow:0 0.5px 1px rgba(0,0,0,0.02)"></div>
<div class="t" style="left:26.2px;top:648.95px;font-size:8.8px;line-height:8.8px;color:#1f2937;font-weight:400;-webkit-text-stroke:0.12px #1f2937">Performans optimizasyonu</div>
<div class="t" style="left:25.8px;top:664.87px;font-size:7.6px;line-height:7.6px;color:#6b7280;display:flex;align-items:center"><span style="display:inline-flex;align-items:center;margin-left:0"><svg width="7.2" height="7.2" viewBox="0 0 24 24" fill="none" stroke="#6b7280" stroke-width="2.2" stroke-linecap="round" stroke-linejoin="round" style="display:inline-block;margin-right:2.6px;position:relative;top:-0.1px"><path d="M19 21v-2a4 4 0 0 0-4-4H9a4 4 0 0 0-4 4v2"/><circle cx="12" cy="7" r="4"/></svg><span>Ayşe Öztürk</span></span><span style="display:inline-flex;align-items:center;margin-left:9px"><svg width="7.2" height="7.2" viewBox="0 0 24 24" fill="none" stroke="#6b7280" stroke-width="2.2" stroke-linecap="round" stroke-linejoin="round" style="display:inline-block;margin-right:2.6px;position:relative;top:-0.1px"><path d="m19 21-7-4-7 4V5a2 2 0 0 1 2-2h10a2 2 0 0 1 2 2v16z"/></svg><span>Performance</span></span><span style="display:inline-flex;align-items:center;margin-left:9px"><svg width="7.2" height="7.2" viewBox="0 0 24 24" fill="none" stroke="#6b7280" stroke-width="2.2" stroke-linecap="round" stroke-linejoin="round" style="display:inline-block;margin-right:2.6px;position:relative;top:-0.1px"><path d="M12 2H2v10l9.29 9.29c.94.94 2.48.94 3.42 0l6.58-6.58c.94-.94.94-2.48 0-3.42L12 2Z"/><path d="M7 7h.01"/></svg><span>8 SP</span></span></div>
<div style="position:absolute;left:710.0999999999999px;top:646.4px;width:40.2px;height:12px;background:#f3f4f6;border-radius:6px"></div>
<div class="t" style="left:530.1999999999999px;width:400px;text-align:center;top:649.90px;font-size:6.5px;line-height:6.5px;color:#5b6270;font-weight:400;">Yapılacak</div>
<div style="position:absolute;left:16.9px;top:690.9px;width:742.3px;height:45.1px;background:#fff;border:1px solid #f0f1f3;border-radius:4.5px;box-sizing:border-box;box-shadow:0 0.5px 1px rgba(0,0,0,0.02)"></div>
<div class="t" style="left:26.2px;top:702.85px;font-size:8.8px;line-height:8.8px;color:#1f2937;font-weight:400;-webkit-text-stroke:0.12px #1f2937">Mobil responsive düzenlemeler</div>
<div class="t" style="left:25.8px;top:718.77px;font-size:7.6px;line-height:7.6px;color:#6b7280;display:flex;align-items:center"><span style="display:inline-flex;align-items:center;margin-left:0"><svg width="7.2" height="7.2" viewBox="0 0 24 24" fill="none" stroke="#6b7280" stroke-width="2.2" stroke-linecap="round" stroke-linejoin="round" style="display:inline-block;margin-right:2.6px;position:relative;top:-0.1px"><path d="M19 21v-2a4 4 0 0 0-4-4H9a4 4 0 0 0-4 4v2"/><circle cx="12" cy="7" r="4"/></svg><span>Mehmet Arslan</span></span><span style="display:inline-flex;align-items:center;margin-left:9px"><svg width="7.2" height="7.2" viewBox="0 0 24 24" fill="none" stroke="#6b7280" stroke-width="2.2" stroke-linecap="round" stroke-linejoin="round" style="display:inline-block;margin-right:2.6px;position:relative;top:-0.1px"><path d="m19 21-7-4-7 4V5a2 2 0 0 1 2-2h10a2 2 0 0 1 2 2v16z"/></svg><span>UI/UX</span></span><span style="display:inline-flex;align-items:center;margin-left:9px"><svg width="7.2" height="7.2" viewBox="0 0 24 24" fill="none" stroke="#6b7280" stroke-width="2.2" stroke-linecap="round" stroke-linejoin="round" style="display:inline-block;margin-right:2.6px;position:relative;top:-0.1px"><path d="M12 2H2v10l9.29 9.29c.94.94 2.48.94 3.42 0l6.58-6.58c.94-.94.94-2.48 0-3.42L12 2Z"/><path d="M7 7h.01"/></svg><span>3 SP</span></span></div>
<div style="position:absolute;left:701.9px;top:700.3px;width:48.4px;height:12px;background:#dcfce7;border-radius:6px"></div>
<div class="t" style="left:526.0999999999999px;width:400px;text-align:center;top:703.80px;font-size:6.5px;line-height:6.5px;color:#2f7448;font-weight:400;">Tamamlandı</div>
<div style="position:absolute;left:0px;top:540px;width:3px;height:1px;background:#e4e5e8"></div>
<div class="t" style="left:799px;top:408.34px;font-size:10px;line-height:10px;color:#1f2937;font-weight:400;-webkit-text-stroke:0.12px #1f2937;letter-spacing:-0.11px">Takım Performansı</div>
<div style="position:absolute;left:798.5px;top:433px;width:351.2px;height:43.4px;background:#f9fafb;border-radius:4px"></div>
<div class="t" style="left:805px;top:442.27px;font-size:7.6px;line-height:7.6px;color:#374151;font-weight:400;">Ahmet Yılmaz</div>
<div style="position:absolute;left:1121.5px;top:439px;width:22.2px;height:13px;background:#fef9c3;border-radius:6.5px"></div>
<div class="t" style="left:932.5999999999999px;width:400px;text-align:center;top:443.50px;font-size:6.5px;line-height:6.5px;color:#9a6a12;font-weight:400;">83%</div>
<div class="t" style="left:805px;top:457.71px;font-size:6.6px;line-height:6.6px;color:#6b7280;font-weight:400;">Tamamlanan: 25h</div>
<div class="t" style="right:24.299999999999955px;top:457.71px;font-size:6.6px;line-height:6.6px;color:#6b7280;font-weight:400;">Kapasite: 30h</div>
<div style="position:absolute;left:805px;top:466.3px;width:338.7px;height:4.3px;background:#e5e7eb;border-radius:2.2px"></div>
<div style="position:absolute;left:805px;top:466.3px;width:282.25px;height:4.3px;background:#e4ac0e;border-radius:2.2px"></div>
<div style="position:absolute;left:798.5px;top:486px;width:351.2px;height:43.4px;background:#f9fafb;border-radius:4px"></div>
<div class="t" style="left:805px;top:495.27px;font-size:7.6px;line-height:7.6px;color:#374151;font-weight:400;">Elif Kaya</div>
<div style="position:absolute;left:1121.5px;top:492px;width:22.2px;height:13px;background:#dcfce7;border-radius:6.5px"></div>
<div class="t" style="left:932.5999999999999px;width:400px;text-align:center;top:496.50px;font-size:6.5px;line-height:6.5px;color:#2f7a4a;font-weight:400;">88%</div>
<div class="t" style="left:805px;top:510.71px;font-size:6.6px;line-height:6.6px;color:#6b7280;font-weight:400;">Tamamlanan: 28h</div>
<div class="t" style="right:24.299999999999955px;top:510.71px;font-size:6.6px;line-height:6.6px;color:#6b7280;font-weight:400;">Kapasite: 32h</div>
<div style="position:absolute;left:805px;top:519.3px;width:338.7px;height:4.3px;background:#e5e7eb;border-radius:2.2px"></div>
<div style="position:absolute;left:805px;top:519.3px;width:296.3625px;height:4.3px;background:#20b455;border-radius:2.2px"></div>
<div style="position:absolute;left:798.5px;top:539px;width:351.2px;height:43.4px;background:#f9fafb;border-radius:4px"></div>
<div class="t" style="left:805px;top:548.27px;font-size:7.6px;line-height:7.6px;color:#374151;font-weight:400;">Can Demir</div>
<div style="position:absolute;left:1121.5px;top:545px;width:22.2px;height:13px;background:#fef9c3;border-radius:6.5px"></div>
<div class="t" style="left:932.5999999999999px;width:400px;text-align:center;top:549.50px;font-size:6.5px;line-height:6.5px;color:#9a6a12;font-weight:400;">79%</div>
<div class="t" style="left:805px;top:563.71px;font-size:6.6px;line-height:6.6px;color:#6b7280;font-weight:400;">Tamamlanan: 22h</div>
<div class="t" style="right:24.299999999999955px;top:563.71px;font-size:6.6px;line-height:6.6px;color:#6b7280;font-weight:400;">Kapasite: 28h</div>
<div style="position:absolute;left:805px;top:572.3px;width:338.7px;height:4.3px;background:#e5e7eb;border-radius:2.2px"></div>
<div style="position:absolute;left:805px;top:572.3px;width:266.12142857142857px;height:4.3px;background:#e4ac0e;border-radius:2.2px"></div>
<div style="position:absolute;left:798.5px;top:592px;width:351.2px;height:43.4px;background:#f9fafb;border-radius:4px"></div>
<div class="t" style="left:805px;top:601.27px;font-size:7.6px;line-height:7.6px;color:#374151;font-weight:400;">Ayşe Öztürk</div>
<div style="position:absolute;left:1121.5px;top:598px;width:22.2px;height:13px;background:#fee2e2;border-radius:6.5px"></div>
<div class="t" style="left:932.5999999999999px;width:400px;text-align:center;top:602.50px;font-size:6.5px;line-height:6.5px;color:#b04040;font-weight:400;">72%</div>
<div class="t" style="left:805px;top:616.71px;font-size:6.6px;line-height:6.6px;color:#6b7280;font-weight:400;">Tamamlanan: 18h</div>
<div class="t" style="right:24.299999999999955px;top:616.71px;font-size:6.6px;line-height:6.6px;color:#6b7280;font-weight:400;">Kapasite: 25h</div>
<div style="position:absolute;left:805px;top:625.3px;width:338.7px;height:4.3px;background:#e5e7eb;border-radius:2.2px"></div>
<div style="position:absolute;left:805px;top:625.3px;width:243.86399999999998px;height:4.3px;background:#dc3535;border-radius:2.2px"></div>
<div style="position:absolute;left:798.5px;top:645px;width:351.2px;height:43.4px;background:#f9fafb;border-radius:4px"></div>
<div class="t" style="left:805px;top:654.27px;font-size:7.6px;line-height:7.6px;color:#374151;font-weight:400;">Mehmet Arslan</div>
<div style="position:absolute;left:1121.5px;top:651px;width:22.2px;height:13px;background:#fef9c3;border-radius:6.5px"></div>
<div class="t" style="left:932.5999999999999px;width:400px;text-align:center;top:655.50px;font-size:6.5px;line-height:6.5px;color:#9a6a12;font-weight:400;">80%</div>
<div class="t" style="left:805px;top:669.71px;font-size:6.6px;line-height:6.6px;color:#6b7280;font-weight:400;">Tamamlanan: 24h</div>
<div class="t" style="right:24.299999999999955px;top:669.71px;font-size:6.6px;line-height:6.6px;color:#6b7280;font-weight:400;">Kapasite: 30h</div>
<div style="position:absolute;left:805px;top:678.3px;width:338.7px;height:4.3px;background:#e5e7eb;border-radius:2.2px"></div>
<div style="position:absolute;left:805px;top:678.3px;width:270.96px;height:4.3px;background:#e4ac0e;border-radius:2.2px"></div>
<div style="position:absolute;left:798.5px;top:698px;width:351.2px;height:43.4px;background:#f9fafb;border-radius:4px"></div>
<div class="t" style="left:805px;top:707.27px;font-size:7.6px;line-height:7.6px;color:#374151;font-weight:400;">Fatma Çelik</div>
<div style="position:absolute;left:1121.5px;top:704px;width:22.2px;height:13px;background:#fef9c3;border-radius:6.5px"></div>
<div class="t" style="left:932.5999999999999px;width:400px;text-align:center;top:708.50px;font-size:6.5px;line-height:6.5px;color:#9a6a12;font-weight:400;">80%</div>
<div class="t" style="left:805px;top:722.71px;font-size:6.6px;line-height:6.6px;color:#6b7280;font-weight:400;">Tamamlanan: 20h</div>
<div class="t" style="right:24.299999999999955px;top:722.71px;font-size:6.6px;line-height:6.6px;color:#6b7280;font-weight:400;">Kapasite: 25h</div>
<div style="position:absolute;left:805px;top:731.3px;width:338.7px;height:4.3px;background:#e5e7eb;border-radius:2.2px"></div>
<div style="position:absolute;left:805px;top:731.3px;width:270.96px;height:4.3px;background:#e4ac0e;border-radius:2.2px"></div>
</body></html>
